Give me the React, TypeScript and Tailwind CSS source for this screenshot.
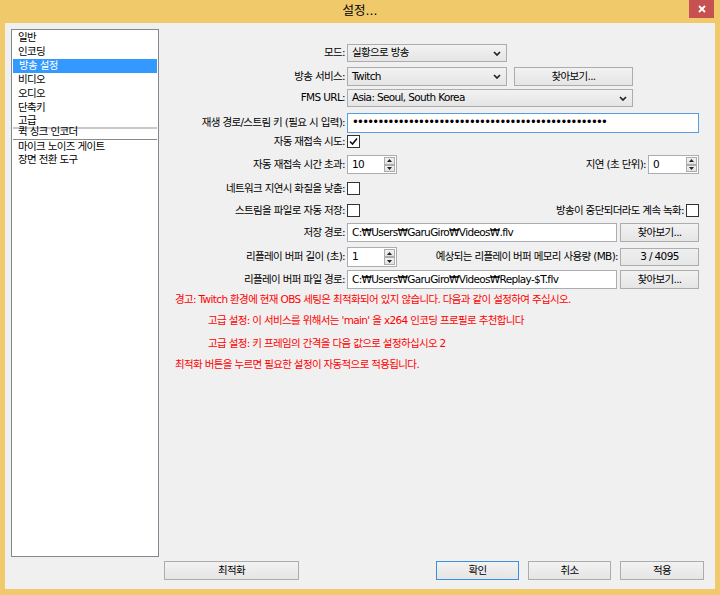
import React from 'react';

const font = 'font-["DejaVu_Sans","Noto_Sans_CJK_KR",sans-serif] text-[10.5px] tracking-[-0.65px] text-black';

const Chevron = () => (
  <svg width="8" height="5" viewBox="0 0 8 5" className="shrink-0">
    <path d="M1 1 L4 4 L7 1" fill="none" stroke="#222" strokeWidth="1.7" />
  </svg>
);

const Combo = ({ value, className }: { value: string; className: string }) => (
  <div className={`${className} h-full flex items-center justify-between border border-[#acacac] bg-gradient-to-b from-[#f2f2f2] to-[#e5e5e5] pl-[4px] pr-[5px]`}>
    <span className="whitespace-nowrap">{value}</span>
    <Chevron />
  </div>
);

const Btn = ({ label, className }: { label: string; className: string }) => (
  <div className={`${className} h-full flex items-center justify-center border border-[#acacac] bg-gradient-to-b from-[#f2f2f2] to-[#e5e5e5]`}>
    {label}
  </div>
);

const Field = ({ value, className }: { value: string; className: string }) => (
  <div className={`${className} h-full flex items-center border border-[#abadb3] bg-white pl-[4px] whitespace-nowrap overflow-hidden`}>
    {value}
  </div>
);

const Arrow = ({ up }: { up?: boolean }) => (
  <div className="flex-1 flex items-center justify-center border border-[#acacac] bg-gradient-to-b from-[#f2f2f2] to-[#e2e2e2]">
    <svg width="5" height="3" viewBox="0 0 5 3">
      <path d={up ? 'M0 3 L2.5 0 L5 3 Z' : 'M0 0 L2.5 3 L5 0 Z'} fill="#222" />
    </svg>
  </div>
);

const Spin = ({ value, className }: { value: string; className: string }) => (
  <div className={`${className} h-full flex border border-[#abadb3] bg-white`}>
    <div className="flex-1 flex items-center pl-[4px]">{value}</div>
    <div className="w-[12px] flex flex-col py-[1px] pr-[1px]">
      <Arrow up />
      <Arrow />
    </div>
  </div>
);

const Check = ({ checked }: { checked?: boolean }) => (
  <div className="w-[13px] h-[13px] border border-[#333] bg-white flex items-center justify-center">
    {checked && (
      <svg width="9" height="9" viewBox="0 0 9 9">
        <path d="M1 4.5 L3.5 7 L8 1.5" fill="none" stroke="#111" strokeWidth="1.6" />
      </svg>
    )}
  </div>
);

const Row = ({ label, className, children }: { label: string; className: string; children?: React.ReactNode }) => (
  <div className={`flex items-center ${className}`}>
    <div className="w-[181px] text-right whitespace-nowrap">{label}</div>
    <div className="ml-[2px] w-[352px] h-full flex items-center">{children}</div>
  </div>
);

const items = ['일반', '인코딩', '방송 설정', '비디오', '오디오', '단축키'];

export default function App() {
  return (
    <div className={`w-[720px] h-[595px] bg-[#f0c96b] flex flex-col ${font}`}>
      {/* title bar */}
      <div className="relative h-[23px] flex items-center justify-center">
        <span className="text-[12.5px] tracking-normal">설정...</span>
        <div className="absolute right-[6px] top-0 w-[25px] h-[18px] bg-[#c75050] flex items-center justify-center">
          <svg width="8" height="8" viewBox="0 0 8 8">
            <path d="M1 1 L7 7 M7 1 L1 7" stroke="#fff" strokeWidth="1.8" />
          </svg>
        </div>
      </div>

      <div className="mx-[5px] mb-[6px] flex-1 bg-[#f0f0f0] flex">
        {/* category list */}
        <div className="ml-[6px] mt-[6px] w-[148px] h-[528px] bg-white border border-[#828790] pt-[1px] flex flex-col">
          {items.map((it) => (
            <div
              key={it}
              className={`h-[14px] flex items-center pl-[6px] ${it === '방송 설정' ? 'bg-[#3399ff] text-white mx-[1px] pl-[5px]' : ''}`}
            >
              {it}
            </div>
          ))}
          <div className="h-[12px] flex items-center pl-[6px]">고급</div>
          <div className="mx-[1px] border-t-2 border-[#c8c8c8] border-b border-b-[#8a8a8a]">
            <div className="h-[10px] flex items-center pl-[5px] -translate-y-[2px]">퀵 싱크 인코더</div>
          </div>
          <div className="h-[13px] flex items-center pl-[6px]">마이크 노이즈 게이트</div>
          <div className="h-[13px] flex items-center pl-[6px]">장면 전환 도구</div>
        </div>

        {/* settings form */}
        <div className="ml-[5px] w-[550px] flex flex-col pt-[21px]">
          <Row label="모드:" className="h-[18px]">
            <Combo value="실황으로 방송" className="w-[160px]" />
          </Row>
          <Row label="방송 서비스:" className="h-[19px] mt-[5px]">
            <Combo value="Twitch" className="w-[160px]" />
            <Btn label="찾아보기..." className="w-[119px] ml-[7px]" />
          </Row>
          <Row label="FMS URL:" className="h-[18px] mt-[3px]">
            <Combo value="Asia: Seoul, South Korea" className="w-[286px]" />
          </Row>
          <Row label="재생 경로/스트림 키 (필요 시 입력):" className="h-[20px] mt-[6px]">
            <div className="w-[352px] h-full flex items-center border border-[#569de5] bg-white pl-[4px] overflow-hidden whitespace-nowrap text-[11.5px] tracking-[-1.7px]">
              {'•'.repeat(50)}
            </div>
          </Row>
          <Row label="자동 재접속 시도:" className="h-[15px] mt-[1px]">
            <Check checked />
          </Row>
          <Row label="자동 재접속 시간 초과:" className="h-[19px] mt-[6px]">
            <Spin value="10" className="w-[50px]" />
            <div className="flex-1 text-right pr-[2px] whitespace-nowrap">지연 (초 단위):</div>
            <Spin value="0" className="w-[51px]" />
          </Row>
          <Row label="네트워크 지연시 화질을 낮춤:" className="h-[15px] mt-[7px]">
            <Check />
          </Row>
          <Row label="스트림을 파일로 자동 저장:" className="h-[15px] mt-[7px]">
            <Check />
            <div className="flex-1 text-right pr-[2px] whitespace-nowrap">방송이 중단되더라도 계속 녹화:</div>
            <Check />
          </Row>
          <Row label="저장 경로:" className="h-[19px] mt-[5px]">
            <Field value="C:₩Users₩GaruGiro₩Videos₩.flv" className="w-[270px]" />
            <Btn label="찾아보기..." className="w-[79px] ml-[3px]" />
          </Row>
          <Row label="리플레이 버퍼 길이 (초):" className="h-[20px] mt-[5px]">
            <Spin value="1" className="w-[50px]" />
            <div className="flex-1 text-right pr-[2px] whitespace-nowrap">예상되는 리플레이 버퍼 메모리 사용량 (MB):</div>
            <div className="w-[79px] h-[18px] flex items-center justify-center border border-[#adadad] bg-gradient-to-b from-[#efefef] to-[#e6e6e6]">
              3 / 4095
            </div>
          </Row>
          <Row label="리플레이 버퍼 파일 경로:" className="h-[19px] mt-[3px]">
            <Field value="C:₩Users₩GaruGiro₩Videos₩Replay-$T.flv" className="w-[270px]" />
            <Btn label="찾아보기..." className="w-[79px] ml-[3px]" />
          </Row>

          <div className="text-[#ff0000] whitespace-nowrap">
            <div className="h-[16px] mt-[3px] ml-[11px] flex items-center">
              경고: Twitch 환경에 현재 OBS 세팅은 최적화되어 있지 않습니다. 다음과 같이 설정하여 주십시오.
            </div>
            <div className="h-[16px] mt-[5px] ml-[44px] flex items-center">
              고급 설정: 이 서비스를 위해서는 'main' 을 x264 인코딩 프로필로 추천합니다
            </div>
            <div className="h-[16px] mt-[7px] ml-[44px] flex items-center">
              고급 설정: 키 프레임의 간격을 다음 값으로 설정하십시오 2
            </div>
            <div className="h-[16px] mt-[5px] ml-[11px] flex items-center">
              최적화 버튼을 누르면 필요한 설정이 자동적으로 적용됩니다.
            </div>
          </div>

          <div className="mt-auto mb-[9px] mr-[10px] h-[19px] flex">
            <Btn label="최적화" className="w-[135px]" />
            <div className="ml-auto flex gap-[9px]">
              <div className="w-[83px] h-[19px] flex items-center justify-center border border-[#3c8fe0] bg-gradient-to-b from-[#f2f2f2] to-[#e5e5e5]">
                확인
              </div>
              <Btn label="취소" className="w-[83px]" />
              <Btn label="적용" className="w-[84px]" />
            </div>
          </div>
        </div>
      </div>
    </div>
  );
}
